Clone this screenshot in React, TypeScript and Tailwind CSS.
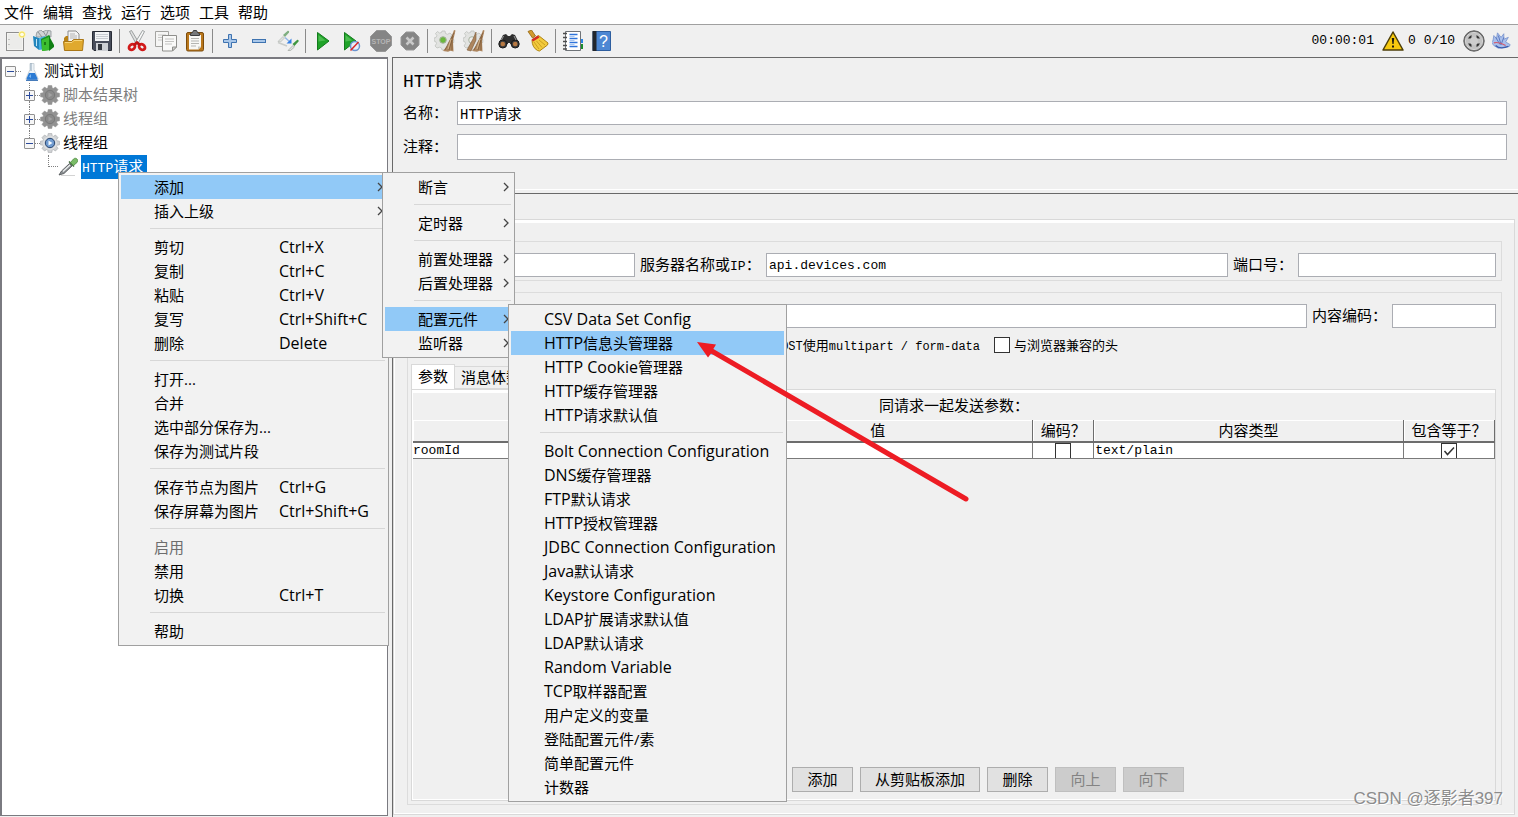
import { Fragment, ReactNode } from 'react';
import clsx from 'clsx';

type MenuEntry =
  | 'separator'
  | { label: string; shortcut?: string; submenu?: boolean; active?: boolean; disabled?: boolean };

const mainMenu = ['文件', '编辑', '查找', '运行', '选项', '工具', '帮助'];

const contextMenu: MenuEntry[] = [
  { label: '添加', submenu: true, active: true },
  { label: '插入上级', submenu: true },
  'separator',
  { label: '剪切', shortcut: 'Ctrl+X' },
  { label: '复制', shortcut: 'Ctrl+C' },
  { label: '粘贴', shortcut: 'Ctrl+V' },
  { label: '复写', shortcut: 'Ctrl+Shift+C' },
  { label: '删除', shortcut: 'Delete' },
  'separator',
  { label: '打开...' },
  { label: '合并' },
  { label: '选中部分保存为...' },
  { label: '保存为测试片段' },
  'separator',
  { label: '保存节点为图片', shortcut: 'Ctrl+G' },
  { label: '保存屏幕为图片', shortcut: 'Ctrl+Shift+G' },
  'separator',
  { label: '启用', disabled: true },
  { label: '禁用' },
  { label: '切换', shortcut: 'Ctrl+T' },
  'separator',
  { label: '帮助' },
];

const addMenu: MenuEntry[] = [
  { label: '断言', submenu: true },
  'separator',
  { label: '定时器', submenu: true },
  'separator',
  { label: '前置处理器', submenu: true },
  { label: '后置处理器', submenu: true },
  'separator',
  { label: '配置元件', submenu: true, active: true },
  { label: '监听器', submenu: true },
];

const configMenu: MenuEntry[] = [
  { label: 'CSV Data Set Config' },
  { label: 'HTTP信息头管理器', active: true },
  { label: 'HTTP Cookie管理器' },
  { label: 'HTTP缓存管理器' },
  { label: 'HTTP请求默认值' },
  'separator',
  { label: 'Bolt Connection Configuration' },
  { label: 'DNS缓存管理器' },
  { label: 'FTP默认请求' },
  { label: 'HTTP授权管理器' },
  { label: 'JDBC Connection Configuration' },
  { label: 'Java默认请求' },
  { label: 'Keystore Configuration' },
  { label: 'LDAP扩展请求默认值' },
  { label: 'LDAP默认请求' },
  { label: 'Random Variable' },
  { label: 'TCP取样器配置' },
  { label: '用户定义的变量' },
  { label: '登陆配置元件/素' },
  { label: '简单配置元件' },
  { label: '计数器' },
];

/* ---------- icons ---------- */

function Icon({ children, size = 22 }: { children: ReactNode; size?: number }) {
  return (
    <svg width={size} height={size} viewBox="0 0 22 22" fill="none" aria-hidden="true">
      {children}
    </svg>
  );
}

const NewIcon = () => (
  <Icon>
    <rect x="2.500" y="2.500" width="17" height="18" fill="#f4f4f2" stroke="#8f8f8f" />
    <path d="M4 4h14v15H4z" fill="#ececea" />
    <path d="M5 9v1M5 14v1" stroke="#999" />
    <circle cx="18" cy="4.500" r="3.600" fill="#fff6a8" />
    <circle cx="18" cy="4.500" r="2.400" fill="#fffde8" stroke="#f1dc50" />
  </Icon>
);

const TemplatesIcon = () => (
  <Icon>
    <path d="M3 6l1-4 4-2 2 2 3-2 5 1v6H4z" fill="#cfd3d5" stroke="#8d9498" strokeWidth=".8" />
    <path d="M5 2l4 5M10 1l3 5M15 1l-2 5" stroke="#7d8488" strokeWidth=".8" />
    <path d="M0 6l6 2v12l-5-4z" fill="#2386bd" />
    <path d="M6 8l6-2v13l-6 1z" fill="#45ade0" />
    <path d="M3.500 9v7" stroke="#bfe6f7" />
    <path d="M8 9l8-4 1 1v14l-8 1z" fill="#1a9420" />
    <path d="M9 10l7-3v13l-7 1z" fill="#3cbf30" />
    <path d="M16 6l5 9v2l-5 4z" fill="#0f7f14" />
    <path d="M11 12h2v3h-2z" fill="#1b7d16" />
  </Icon>
);

const OpenIcon = () => (
  <Icon>
    <path d="M6 10V1h8l3 3v8H6z" fill="#f3f3f3" stroke="#8b8b8b" />
    <path d="M8 4h5M8 6h7M8 8h7" stroke="#b3b3b3" />
    <path d="M2 20V8l2-2h2v5h12v9z" fill="#b98216" />
    <path d="M1.500 11.500h8l2-2h10l-1 11h-18z" fill="#e0a92e" stroke="#aa7717" />
    <path d="M3 12.500h7l2-2h8" stroke="#f6d377" />
  </Icon>
);

const SaveIcon = () => (
  <Icon>
    <path d="M1.500 1.500h19v19H3l-1.500-1.500z" fill="#484d5b" stroke="#282c36" />
    <rect x="4" y="2" width="14" height="9" fill="#f3f5f7" />
    <path d="M5 4.500h12M5 6.500h12M5 8.500h12" stroke="#c8ccd2" />
    <rect x="5" y="13" width="12" height="8" fill="#cdd0d5" />
    <rect x="7" y="14" width="4" height="6" fill="#33373f" />
  </Icon>
);

const CutIcon = () => (
  <Icon>
    <path d="M3.500 1.500L5.500.5l7.500 12.500-2.500 1.500z" fill="#e0e2e2" stroke="#868a8c" strokeWidth=".8" />
    <path d="M18.500 1.500L16.500.5 9 13l2.500 1.500z" fill="#f8f9f9" stroke="#868a8c" strokeWidth=".8" />
    <ellipse cx="6" cy="17" rx="3.200" ry="2.500" transform="rotate(-35 6 17)" stroke="#d11a1a" strokeWidth="2.800" />
    <ellipse cx="16" cy="17" rx="3.200" ry="2.500" transform="rotate(35 16 17)" stroke="#d11a1a" strokeWidth="2.800" />
    <path d="M8 15l3-2.500 3 2.500" stroke="#c11212" strokeWidth="2.500" />
  </Icon>
);

const CopyIcon = () => (
  <Icon>
    <path d="M.5 1.500h13v15H.5z" fill="#f5f5f4" stroke="#a3a3a0" />
    <path d="M3 5h8M3 7.500h8M3 10h8" stroke="#c8c8c6" />
    <path d="M7.500 5.500h14V17l-4 4h-10z" fill="#f9f9f8" stroke="#8f8f8c" />
    <path d="M10 9h9M10 11.500h9M10 14h7" stroke="#c4c4c2" />
    <path d="M21.500 17h-4v4z" fill="#cfcfcc" stroke="#8f8f8c" />
  </Icon>
);

const PasteIcon = () => (
  <Icon>
    <rect x="2.500" y="2.500" width="17" height="18.500" rx="1.500" fill="#b9771c" stroke="#7c4c0c" />
    <path d="M5 5h12v12l-2.500 2.500H5z" fill="#f8f8f6" />
    <path d="M7 8.500h8M7 11h8M7 13.500h8M7 16h5" stroke="#b5b5b2" />
    <path d="M17 16.500h-3v3z" fill="#c9c9c4" />
    <path d="M6.500 5.500V3.500l2-1 1-2h3l1 2 2 1v2z" fill="#77797b" stroke="#3c3d3f" />
  </Icon>
);

const PlusIcon = () => (
  <Icon>
    <path d="M9.500 4.500h3v5h5v3h-5v5h-3v-5h-5v-3h5z" fill="#a9c7e9" stroke="#3e73b0" />
  </Icon>
);

const MinusIcon = () => (
  <Icon>
    <rect x="4.500" y="9.500" width="13" height="3" fill="#a9c7e9" stroke="#3e73b0" />
  </Icon>
);

const ToggleIcon = () => (
  <Icon>
    <path d="M1 11.500l5-5 1.500 1.500-4 4z" fill="#dfe2df" stroke="#b3b8b3" strokeWidth=".7" />
    <path d="M6 5l4.500-4c1-.6 2 .4 1.500 1.500L8 7z" fill="#7fae80" />
    <path d="M1 12.500l9 3.500" stroke="#c9ccc9" strokeWidth="1.800" />
    <path d="M11 20.500l5-5 1.500 1.500-4 3.500z" fill="#dfe2df" stroke="#9da39d" strokeWidth=".7" />
    <path d="M15.500 14l4.500-4c1-.6 2 .4 1.500 1.500L17.500 16z" fill="#3f9640" />
    <path d="M8 7.500l5 4.500" stroke="#8fb4e8" strokeWidth="1.300" />
    <path d="M14.500 8.500v5h-5z" fill="#3480e4" />
  </Icon>
);

const StartIcon = () => (
  <Icon>
    <path d="M5.500 2.500L17 11 5.500 20z" fill="#1fa329" stroke="#137b1c" />
    <path d="M6.500 5l7 5.500-7 1z" fill="#4cbd50" />
  </Icon>
);

const StartNoPausesIcon = () => (
  <Icon>
    <path d="M3.500 2.500L15 11 3.500 20z" fill="#1fa329" stroke="#137b1c" />
    <path d="M4.500 5l7 5.500-7 1z" fill="#4cbd50" />
    <circle cx="14" cy="16" r="4.500" fill="#e6eefa" stroke="#6b93cf" strokeWidth="1.500" />
    <path d="M17.500 12l-8 8.500" stroke="#dc2626" strokeWidth="1.500" />
  </Icon>
);

const StopIcon = () => (
  <Icon>
    <path d="M6.500.5h9l6 6v9l-6 6h-9l-6-6v-9z" fill="#858585" stroke="#979797" />
    <text x="11" y="14" textAnchor="middle" fontSize="7" fontWeight="700" fontFamily="Liberation Sans" fill="#b5b5b5">
      STOP
    </text>
  </Icon>
);

const ShutdownIcon = () => (
  <Icon>
    <path d="M7 2h8l5 5v8l-5 5H7l-5-5V7z" fill="#858585" stroke="#979797" />
    <path d="M7.500 7.500l7 7M14.500 7.500l-7 7" stroke="#c8c8c8" strokeWidth="2.500" />
  </Icon>
);

function SweepIcon({ all = false }: { all?: boolean }) {
  return (
    <Icon>
      <path
        d="M8 1h3l.5 2.500 2 .8L16 3l2 2-1.500 2 .8 2 2.500.5v3l-2.500.5-.8 2 1.500 2-2 2-2.500-1.300-2 .8L11 20H8l-.5-2-2-.8L3 18l-2-2 1.500-2.500-.8-2L0 11V8l2-.5.800-2L1.500 3.500l2-2 2 1.500 2-.5z"
        fill="#e2e3e1"
        stroke="#bfc1be"
        strokeWidth=".8"
      />
      <circle cx="9" cy="10" r="3.300" fill={all ? '#eeeeec' : '#6bb83c'} stroke="#a9b3a2" />
      <path d="M20 0l1.500.5L19 11l.5 10.500-3-.8-2.500 1-5-.7 4-5 4-8z" fill="#ad855e" />
      <path d="M20 3l-5 9-4 8M19 6l-4 14M18 10v10" stroke="#7d5a38" strokeWidth=".8" />
      <path d="M17 9l-3 10" stroke="#dcbf97" strokeWidth=".8" />
      {all && <path d="M13 2l-3 7-6 11 4 1 5-11z" fill="#ad855e" stroke="#7d5a38" strokeWidth=".6" />}
    </Icon>
  );
}

const SearchIcon = () => (
  <Icon>
    <path d="M5 5l3-1 2 2h2l2-2 3 1 4 8v3l-9-2v-1h-2v1l-9 2v-3z" fill="#2f2f2f" />
    <circle cx="4.800" cy="14" r="4" fill="#3d3d3d" stroke="#171717" />
    <circle cx="17.200" cy="14" r="4" fill="#3d3d3d" stroke="#171717" />
    <circle cx="4.800" cy="14" r="2.300" fill="#b87942" />
    <circle cx="17.200" cy="14" r="2.300" fill="#b87942" />
    <path d="M5.500 6l-2 4M16 6l2 4" stroke="#9b9b9b" />
  </Icon>
);

const BroomIcon = () => (
  <Icon>
    <path d="M1 1.500l3.500-1.500 4 6-3 2z" fill="#d39a2c" stroke="#90630f" strokeWidth=".8" />
    <path d="M5 10l6.500-4.500L21 13l-.5 2-8 6-2-.5C7 18.500 5 15 5 10z" fill="#f2ca3c" stroke="#b08411" />
    <path d="M7 12l5 7M9.500 11l5.500 6.500M12 10l6 5" stroke="#c2941a" strokeWidth=".8" />
    <path d="M4.500 9.500l6.500-4 1.500 2-6.500 4z" fill="#d52b1e" />
  </Icon>
);

const FunctionIcon = () => (
  <Icon>
    <rect x="17" y="9" width="4" height="4" fill="#2b84e4" />
    <rect x="17" y="14" width="4" height="5" fill="#1b8c2d" />
    <path d="M3.500 1.500h15v19h-15z" fill="#fff" stroke="#6f7378" />
    <path d="M7.500 4.500h8M7.500 8.500h8M7.500 12.500h8M7.500 16.500h8" stroke="#2f74da" strokeWidth="1.300" />
    <path d="M7.500 6.500h5M7.500 10.500h5M7.500 14.500h5" stroke="#a8c7f2" />
    <path d="M1 3.500h4M1 7.500h4M1 11.500h4M1 15.500h4M1 19h4" stroke="#4d4d4d" strokeWidth="1.300" />
  </Icon>
);

const HelpIcon = () => (
  <Icon>
    <path d="M2 1.500h17.500v19H2z" fill="#4d87d3" stroke="#2e5e9f" />
    <path d="M1.500 1h4v20h-4z" fill="#23272d" />
    <text x="12.500" y="16.500" textAnchor="middle" fontSize="16" fontFamily="Liberation Sans" fill="#fff">
      ?
    </text>
  </Icon>
);

const WarningIcon = () => (
  <Icon>
    <path d="M11 2L21 20H1z" fill="#f6c90f" stroke="#4c3e08" strokeWidth="1.500" strokeLinejoin="round" />
    <path d="M9.800 8h2.400l-.6 6h-1.200z" fill="#1c1a10" />
    <rect x="10" y="15.500" width="2" height="2" fill="#1c1a10" />
  </Icon>
);

const ThreadsIcon = () => (
  <Icon>
    <circle cx="11" cy="11" r="10.200" fill="#828282" stroke="#5b5b5b" />
    <circle cx="11" cy="11" r="8.600" fill="#c2c2c2" stroke="#d5d5d5" />
    <path d="M5 8.500A7 7 0 018.500 5v3.500zM13.500 5A7 7 0 0117 8.500h-3.500zM17 13.500a7 7 0 01-3.500 3.500v-3.500zM8.500 17A7 7 0 015 13.500h3.500z" fill="#343434" />
    <circle cx="11" cy="11" r="4" fill="#cdcdcd" />
  </Icon>
);

const FeatherIcon = () => (
  <Icon size={20}>
    <path d="M2 5l3 3 1-6 4 5 3-4v6l5-2-3 5 5 3-1 2-6 1-6 1-5-3-3-4 2-1z" fill="#a9c0ec" stroke="#6f8bc9" strokeWidth=".8" />
    <path d="M4 7l5 8M7 5l3 10M13 7l-3 8" stroke="#4a68b5" strokeWidth=".9" />
    <path d="M2 13c4-1 8 0 13 3" stroke="#d3586b" strokeWidth="1.300" />
    <path d="M4 16c3 3 9 3 14 1" stroke="#3c5cad" strokeWidth="1.500" />
  </Icon>
);

const FlaskIcon = () => (
  <svg width="16" height="20" viewBox="0 0 16 20" fill="none" aria-hidden="true">
    <path d="M6 2.500h4v6l4 9c.3 1-.2 1.500-1.500 1.500h-9c-1.300 0-1.800-.5-1.500-1.500l4-9z" fill="#edf3f8" stroke="#c9d2d9" />
    <path d="M5 12h6l2.500 5.500c0 1-.5 1.200-1.500 1.200H4c-1 0-1.500-.2-1.500-1.200z" fill="#2c7bd4" />
    <path d="M7 2v8" stroke="#8fa6b8" />
    <path d="M5 15.500l2-2.500v4z" fill="#7cb8f3" />
    <path d="M2 19.300h12" stroke="#1f5fae" />
  </svg>
);

function GearIcon({ enabled = false }: { enabled?: boolean }) {
  const teeth = [0, 45, 90, 135, 180, 225, 270, 315];
  return (
    <svg width="20" height="20" viewBox="0 0 20 20" fill="none" aria-hidden="true">
      <g fill={enabled ? '#cfd1d3' : '#929292'} stroke={enabled ? '#9a9da0' : '#929292'} strokeWidth=".5">
        {teeth.map((angle) => (
          <path key={angle} d="M7.500 4l.7-3.500h3.600l.7 3.500z" transform={`rotate(${angle} 10 10)`} />
        ))}
      </g>
      <circle cx="10" cy="10" r="7.200" fill={enabled ? '#dcdee0' : '#929292'} />
      <circle cx="10" cy="10" r="4.700" fill={enabled ? '#6f9bd0' : '#8a8a8a'} stroke={enabled ? '#28446e' : '#797979'} />
      <path d="M8.500 7.500l4 2.500-4 2.500z" fill={enabled ? '#f4f9ff' : '#a2a2a2'} />
    </svg>
  );
}

const DropperIcon = () => (
  <svg width="20" height="20" viewBox="0 0 20 20" fill="none" aria-hidden="true">
    <path d="M3 18.500h14" stroke="#d3d3d3" />
    <path d="M1 18l2.500-4 8-7.500 2.500 2.500-8 7.500z" fill="#8d9194" stroke="#4a4e51" strokeWidth=".8" />
    <path d="M5 14.500l7-6.500" stroke="#eceff0" strokeWidth="1.300" />
    <path d="M10.500 5l1-1 5 5-1 1z" fill="#3f6a38" />
    <path d="M12.500 5.500l3-3.500c1-1 2.500-1 3.500 0s.8 2.500 0 3.500l-3.500 3z" fill="#7bbd67" stroke="#4c8a40" strokeWidth=".8" />
  </svg>
);

const toolGroups = [
  [
    { name: '新建', icon: <NewIcon /> },
    { name: '模板', icon: <TemplatesIcon /> },
    { name: '打开', icon: <OpenIcon /> },
    { name: '保存', icon: <SaveIcon /> },
  ],
  [
    { name: '剪切', icon: <CutIcon /> },
    { name: '复制', icon: <CopyIcon /> },
    { name: '粘贴', icon: <PasteIcon /> },
  ],
  [
    { name: '展开', icon: <PlusIcon /> },
    { name: '收起', icon: <MinusIcon /> },
    { name: '切换', icon: <ToggleIcon /> },
  ],
  [
    { name: '启动', icon: <StartIcon /> },
    { name: '不停顿启动', icon: <StartNoPausesIcon /> },
    { name: '停止', icon: <StopIcon /> },
    { name: '关闭', icon: <ShutdownIcon /> },
  ],
  [
    { name: '清除', icon: <SweepIcon /> },
    { name: '清除全部', icon: <SweepIcon all /> },
  ],
  [
    { name: '搜索', icon: <SearchIcon /> },
    { name: '重置搜索', icon: <BroomIcon /> },
  ],
  [
    { name: '函数助手', icon: <FunctionIcon /> },
    { name: '帮助', icon: <HelpIcon /> },
  ],
];

/* ---------- shared pieces ---------- */

// monospace first, for text that is mostly Latin
const mono = "font-['Liberation_Mono','Noto_Sans_CJK_SC',monospace]";
const cjk = "font-['Noto_Sans_CJK_SC',sans-serif]";

// Latin runs are set smaller so that two letters take the width of one ideograph
const Latin = ({ children, small }: { children: ReactNode; small?: boolean }) => (
  <span className={clsx(mono, small ? 'text-[12px]' : 'text-[13px]')}>{children}</span>
);

// menu text: Latin runs are one step larger than the ideographs
function MenuText({ text }: { text: string }) {
  return (
    <>
      {text
        .split(/([A-Za-z+][A-Za-z+ ]*)/)
        .filter(Boolean)
        .map((part, index) =>
          /^[A-Za-z+]/.test(part) ? (
            <span key={index} className="text-[16px]">
              {part}
            </span>
          ) : (
            part
          )
        )}
    </>
  );
}

function TextField({ id, value, label, className }: { id: string; value?: string; label?: string; className?: string }) {
  return (
    <input
      id={id}
      type="text"
      aria-label={label}
      defaultValue={value}
      className={clsx(mono, 'h-6 min-w-0 border border-[#abadb3] bg-white px-0.5 outline-none', className)}
    />
  );
}

function CheckBox({ id, label, checked }: { id: string; label?: string; checked?: boolean }) {
  return (
    <span className="inline-grid h-4 w-4 shrink-0">
      <input
        id={id}
        type="checkbox"
        aria-label={label}
        defaultChecked={checked}
        className="peer col-start-1 row-start-1 h-4 w-4 appearance-none border border-[#333] bg-white"
      />
      <svg
        viewBox="0 0 16 16"
        className="pointer-events-none invisible col-start-1 row-start-1 h-4 w-4 peer-checked:visible"
        fill="none"
        stroke="#333"
        strokeWidth="1.500"
        aria-hidden="true"
      >
        <path d="M3.500 8l3 3.500L13 4.500" />
      </svg>
    </span>
  );
}

function PopupMenu({ entries, label, className }: { entries: MenuEntry[]; label: string; className: string }) {
  return (
    <ul
      role="menu"
      aria-label={label}
      className={clsx(
        "absolute border border-[#a0a0a0] bg-[#f2f2f2] p-0.5 font-['Open_Sans','Noto_Sans_CJK_SC',sans-serif] text-[15px] text-black",
        className
      )}
    >
      {entries.map((entry, index) =>
        entry === 'separator' ? (
          <li key={index} role="separator" className="h-3 pt-[5px] pr-px pl-[29px]">
            <span className="block h-px w-full bg-[#d7d7d7]" />
          </li>
        ) : (
          <li key={index} role="none">
            <button
              type="button"
              role="menuitem"
              disabled={entry.disabled}
              className={clsx(
                'flex h-6 w-full items-center pr-[3px] pl-[33px] text-left leading-6 whitespace-nowrap',
                entry.active && 'bg-[#91c9f7]',
                entry.disabled && 'text-[#6d6d6d]'
              )}
            >
              <span className={clsx(entry.shortcut && 'w-[125px]')}>
                <MenuText text={entry.label} />
              </span>
              {entry.shortcut && (
                <span>
                  <MenuText text={entry.shortcut} />
                </span>
              )}
              {entry.submenu && (
                <svg width="6" height="10" viewBox="0 0 6 10" className="ml-auto" fill="none" stroke="#444" aria-hidden="true">
                  <path d="M1 1l4 4-4 4" strokeWidth="1.300" />
                </svg>
              )}
            </button>
          </li>
        )
      )}
    </ul>
  );
}

function Expander({ open, up, down }: { open?: boolean; up?: boolean; down?: boolean }) {
  return (
    <span className="flex h-6 w-[11px] shrink-0 flex-col items-center">
      <span className={clsx('flex-1 border-l border-dotted', up ? 'border-[#808080]' : 'border-transparent')} />
      <button
        type="button"
        aria-label={open ? '收起' : '展开'}
        className="flex h-[11px] w-[11px] items-center justify-center rounded-[1px] border border-[#919191] bg-[#f6f6f6]"
      >
        <svg width="7" height="7" viewBox="0 0 7 7" stroke="#2b4a9b" aria-hidden="true">
          <path d={open ? 'M0 3.500h7' : 'M0 3.500h7M3.500 0v7'} />
        </svg>
      </button>
      <span className={clsx('flex-1 border-l border-dotted', down ? 'border-[#808080]' : 'border-transparent')} />
    </span>
  );
}

const Twig = () => <span className="w-[5px] shrink-0 border-t border-dotted border-[#808080]" />;

/* ---------- page sections ---------- */

function Toolbar() {
  return (
    <div className="flex h-8 items-center bg-[#f0f0f0] pr-1.5">
      {toolGroups.map((group, index) => (
        <Fragment key={index}>
          {index > 0 && <span className="mr-0.5 ml-[3px] h-6 w-px bg-[#8a8a8a]" />}
          {group.map((tool) => (
            <button key={tool.name} type="button" title={tool.name} className="flex h-7 w-[29px] items-center justify-center">
              {tool.icon}
            </button>
          ))}
        </Fragment>
      ))}
      <div className={clsx(mono, 'ml-auto flex items-center text-[13px]')}>
        <span className="mr-2">00:00:01</span>
        <WarningIcon />
        <span className="mr-2 ml-1">0</span>
        <span className="mr-2">0/10</span>
        <ThreadsIcon />
        <span className="ml-[7px]">
          <FeatherIcon />
        </span>
      </div>
    </div>
  );
}

function TestTree() {
  return (
    <aside className="w-[388px] shrink-0 border border-t-2 border-l-2 border-[#7a7a80] bg-white text-[15px] leading-6">
      <ul role="tree">
        <li role="treeitem" className="flex h-6 items-center pl-[3px]">
          <Expander open />
          <Twig />
          <span className="mr-1 ml-[3px]">
            <FlaskIcon />
          </span>
          <span>测试计划</span>
        </li>
        <li role="treeitem" className="flex h-6 items-center pl-[22px] text-[#7d7d7d]">
          <Expander up down />
          <Twig />
          <GearIcon />
          <span className="ml-[3px]">脚本结果树</span>
        </li>
        <li role="treeitem" className="flex h-6 items-center pl-[22px] text-[#7d7d7d]">
          <Expander up down />
          <Twig />
          <GearIcon />
          <span className="ml-[3px]">线程组</span>
        </li>
        <li role="treeitem" className="flex h-6 items-center pl-[22px]">
          <Expander open up />
          <Twig />
          <GearIcon enabled />
          <span className="ml-[3px]">线程组</span>
        </li>
        <li role="treeitem" aria-selected="true" className="flex h-6 items-center pl-[46px]">
          <span className="h-3 w-2.5 self-start border-b border-l border-dotted border-[#808080]" />
          <DropperIcon />
          <span className="ml-[3px] h-6 bg-[#0078d7] pr-1 pl-px text-white">
            <Latin>HTTP</Latin>请求
          </span>
        </li>
      </ul>
    </aside>
  );
}

function ParameterTable() {
  const head = 'border-r border-[#6d6d6d] p-0 font-normal shadow-[inset_1px_1px_0_#fff]';
  const cell = 'h-[15px] border-r border-[#7a7a7a] p-0 leading-[14px]';
  return (
    <table className="w-full table-fixed border-collapse">
      <colgroup>
        <col />
        <col />
        <col className="w-[61px]" />
        <col />
        <col className="w-[91px]" />
      </colgroup>
      <thead>
        <tr className="h-[22px] border-b-2 border-[#6d6d6d] leading-5">
          <th className={head} aria-label="名称" />
          <th className={head}>值</th>
          <th className={head}>编码？</th>
          <th className={head}>内容类型</th>
          <th className={head}>包含等于？</th>
        </tr>
      </thead>
      <tbody>
        <tr className="border-b border-[#7a7a7a] bg-white">
          <td className={clsx(cell, mono, 'text-[13px]')}>roomId</td>
          <td className={cell} />
          <td className={cell}>
            <span className="flex h-[15px] justify-center overflow-hidden">
              <CheckBox id="param-encode" label="编码" />
            </span>
          </td>
          <td className={clsx(cell, mono, 'pl-px text-[13px]')}>text/plain</td>
          <td className={cell}>
            <span className="flex h-[15px] justify-center overflow-hidden">
              <CheckBox id="param-equals" label="包含等于" checked />
            </span>
          </td>
        </tr>
      </tbody>
    </table>
  );
}

function ParameterPane() {
  const button =
    'h-[25px] min-w-[61px] border border-[#adadad] bg-[#e1e1e1] px-3.5 leading-5 disabled:border-[#bfbfbf] disabled:bg-[#ccc] disabled:text-[#838383]';
  return (
    <>
      <div role="tablist" className="mt-[11px] flex h-[25px] items-end">
        <button type="button" role="tab" aria-selected="true" className="h-[25px] border border-b-0 border-[#d9d9d9] bg-white px-1.5">
          参数
        </button>
        <button type="button" role="tab" aria-selected="false" className="h-[23px] border border-l-0 border-[#d9d9d9] px-1.5">
          消息体数据
        </button>
      </div>
      <div className="flex flex-1 flex-col border border-[#d9d9d9]">
        <div className="flex flex-1 flex-col border-t-[3px] border-b border-l border-white">
          <h2 className="h-[27px] text-center leading-[26px]">同请求一起发送参数：</h2>
          <ParameterTable />
          <div className="mt-auto mb-[7px] flex justify-center gap-[7px]">
            <button type="button" className={button}>详细</button>
            <button type="button" className={button}>添加</button>
            <button type="button" className={button}>从剪贴板添加</button>
            <button type="button" className={button}>删除</button>
            <button type="button" className={button} disabled>向上</button>
            <button type="button" className={button} disabled>向下</button>
          </div>
        </div>
      </div>
    </>
  );
}

function RequestPanel() {
  return (
    <main className="flex min-w-0 flex-1 flex-col border-t border-l border-[#696969] text-[15px]">
      <section className="h-32 pt-2 pr-[11px] pl-2.5">
        <h1 className={clsx(mono, 'h-[35px] text-[18px] leading-8')}>HTTP请求</h1>
        <div className="flex items-center">
          <label htmlFor="name" className="w-[54px]">名称：</label>
          <TextField id="name" value="HTTP请求" className="flex-1 text-[14px]" />
        </div>
        <div className="mt-[9px] flex items-center">
          <label htmlFor="comment" className="w-[54px]">注释：</label>
          <TextField id="comment" className="h-[26px] flex-1 text-[14px]" />
        </div>
      </section>
      <div className="mt-[3px] h-[5px] border-t border-b border-t-white border-b-[#696969]" />

      <div className="mt-[25px] mr-[3px] mb-0.5 flex flex-1 flex-col border border-[#d9d9d9]">
        <div className="flex flex-1 flex-col border-t-[3px] border-b border-l border-white px-3 pt-[18px] pb-2">
          <div className="flex items-center border border-[#dcdcdc] pt-[11px] pr-[5px] pb-[3px]">
            <TextField id="protocol" label="协议" className="ml-12 w-[179px]" />
            <label htmlFor="server" className="mr-1 ml-[5px] w-[122px]">
              服务器名称或<Latin>IP</Latin>：
            </label>
            <TextField id="server" value="api.devices.com" className="flex-1 text-[13px]" />
            <label htmlFor="port" className="ml-[5px] w-[65px]">端口号：</label>
            <TextField id="port" className="w-[198px] text-[13px]" />
          </div>

          <div className="mt-[11px] flex flex-1 flex-col border border-[#dcdcdc] pt-[11px] pr-[5px] pb-[3px] pl-[3px]">
            <div className="flex items-center">
              <TextField id="path" label="路径" className="ml-32 flex-1 text-[13px]" />
              <label htmlFor="encoding" className="ml-[5px] w-20">内容编码：</label>
              <TextField id="encoding" className="w-[104px] text-[13px]" />
            </div>
            <div className={clsx(cjk, 'mt-[9px] flex h-4 items-center text-[13px]')}>
              <div className="mr-3.5 flex w-[569px] items-center justify-end gap-1">
                <CheckBox id="multipart" />
                <label htmlFor="multipart" className="whitespace-nowrap">
                  对<Latin small>POST</Latin>使用<Latin small>multipart / form-data</Latin>
                </label>
              </div>
              <CheckBox id="compatible-headers" />
              <label htmlFor="compatible-headers" className="ml-1">与浏览器兼容的头</label>
            </div>
            <ParameterPane />
          </div>
        </div>
      </div>
    </main>
  );
}

export default function App() {
  return (
    <div className="relative flex min-h-screen flex-col overflow-hidden bg-[#f0f0f0] font-['Liberation_Sans','Noto_Sans_CJK_SC',sans-serif] text-black">
      <nav className={clsx(cjk, 'flex h-[25px] items-center gap-[9px] border-b border-[#a0a0a0] bg-white pl-1 text-[15px]')}>
        {mainMenu.map((item) => (
          <button key={item} type="button" className="leading-6">
            {item}
          </button>
        ))}
      </nav>
      <Toolbar />
      <div className="flex flex-1">
        <div className="mr-1 flex pb-px">
          <TestTree />
        </div>
        <RequestPanel />
      </div>

      <PopupMenu entries={contextMenu} label="节点" className="top-[172px] left-[118px] w-[271px]" />
      <PopupMenu entries={addMenu} label="添加" className="top-[172px] left-[382px] w-[133px]" />
      <PopupMenu entries={configMenu} label="配置元件" className="top-[304px] left-[508px] w-[279px]" />

      <svg
        width="280"
        height="170"
        viewBox="0 0 280 170"
        className="pointer-events-none absolute top-[336px] left-[692px]"
        aria-hidden="true"
      >
        <path d="M18 14L274 163" stroke="#ed1c24" strokeWidth="5" strokeLinecap="round" />
        <path d="M5 6l19 2.500-3 5-2 4-3 4z" fill="#ed1c24" />
      </svg>

      <p className="absolute right-[15px] bottom-1.5 text-[17px] leading-6 text-[#8c8c8c] [text-shadow:1px_1px_0_#fff]">
        CSDN @逐影者397
      </p>
    </div>
  );
}
